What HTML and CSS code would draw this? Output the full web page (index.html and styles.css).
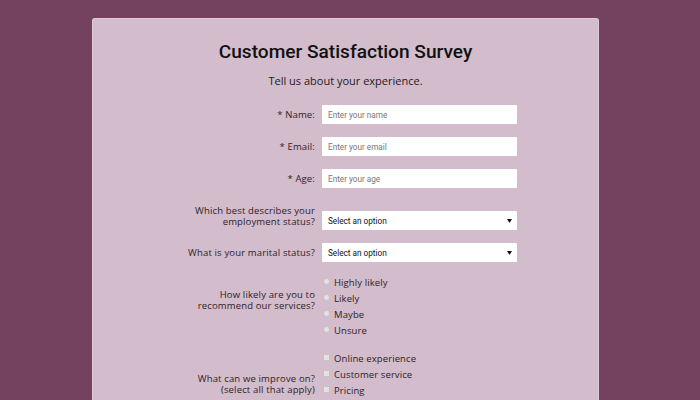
FILE: index.html
```html
<!DOCTYPE html>
<html lang="en">
<head>
<meta charset="utf-8">
<title>Customer Satisfaction Survey</title>
<link rel="stylesheet" href="styles.css">
</head>
<body>
<main class="card">
  <h1 class="title">Customer Satisfaction Survey</h1>
  <p class="subtitle">Tell us about your experience.</p>
  <form class="form">
    <div class="row row-center">
      <div class="label-col"><label class="label" for="name">* Name:</label></div>
      <div class="control"><input class="field" id="name" type="text" placeholder="Enter your name"></div>
    </div>
    <div class="row row-center">
      <div class="label-col"><label class="label" for="email">* Email:</label></div>
      <div class="control"><input class="field" id="email" type="email" placeholder="Enter your email"></div>
    </div>
    <div class="row row-center">
      <div class="label-col"><label class="label" for="age">* Age:</label></div>
      <div class="control"><input class="field" id="age" type="text" placeholder="Enter your age"></div>
    </div>
    <div class="row row-top row-employment">
      <div class="label-col"><label class="label" for="employment">Which best describes your employment status?</label></div>
      <div class="control"><select class="field select" id="employment"><option>Select an option</option></select></div>
    </div>
    <div class="row row-center row-tight">
      <div class="label-col"><label class="label" for="marital">What is your marital status?</label></div>
      <div class="control"><select class="field select" id="marital"><option>Select an option</option></select></div>
    </div>
    <div class="row row-top row-tight row-radio">
      <div class="label-col"><span class="label">How likely are you to recommend our services?</span></div>
      <ul class="control choices">
        <li class="choice"><input class="radio" type="radio" name="rec"><span>Highly likely</span></li>
        <li class="choice"><input class="radio" type="radio" name="rec"><span>Likely</span></li>
        <li class="choice"><input class="radio" type="radio" name="rec"><span>Maybe</span></li>
        <li class="choice"><input class="radio" type="radio" name="rec"><span>Unsure</span></li>
      </ul>
    </div>
    <div class="row row-top row-check">
      <div class="label-col"><span class="label">What can we improve on?<br>(select all that apply)</span></div>
      <ul class="control choices">
        <li class="choice"><input class="check" type="checkbox"><span>Online experience</span></li>
        <li class="choice"><input class="check" type="checkbox"><span>Customer service</span></li>
        <li class="choice"><input class="check" type="checkbox"><span>Pricing</span></li>
      </ul>
    </div>
  </form>
</main>
</body>
</html>
```
FILE: styles.css
```css
html, body {
  margin: 0;
  padding: 0;
}
body {
  background: #74415f;
  font-family: "Open Sans", "DejaVu Sans", sans-serif;
  color: #2e2229;
  height: 400px;
  overflow: hidden;
}
.card {
  width: 507px;
  margin: 18px 0 0 92px;
  padding-top: 22px;
  background: #d3bccb;
  border-radius: 3px;
  box-shadow: inset 0 0 0 1px rgba(255, 255, 255, 0.25);
  min-height: 420px;
}
.title {
  margin: 0;
  font-family: Roboto, "Liberation Sans", sans-serif;
  font-weight: 500;
  font-size: 19.1px;
  line-height: 24px;
  text-align: center;
  color: #111;
}
.subtitle {
  margin: 10px 0 0;
  font-size: 11px;
  line-height: 14px;
  text-align: center;
  color: #1e1a1d;
}
.form {
  margin-top: 17px;
}
.row {
  display: flex;
  margin-bottom: 13px;
}
.row-center { align-items: center; }
.row-top { align-items: flex-start; }
.row-tight { margin-bottom: 12px; }
.label-col {
  width: 223px;
  display: flex;
  justify-content: flex-end;
}
.label {
  max-width: 128px;
  text-align: right;
  font-size: 9.5px;
  font-weight: 500;
  line-height: 11px;
  letter-spacing: 0.15px;
  color: #2e2229;
}
.row-employment .label { padding-top: 3.5px; }
.row-employment .control { margin-top: 10px; }
.row-radio .label { padding-top: 14.5px; }
.row-check .label { padding-top: 22.5px; }
.control {
  margin: 0 0 0 7px;
  width: 195px;
  padding: 0;
}
.field {
  box-sizing: border-box;
  display: block;
  width: 195px;
  height: 19px;
  margin: 0;
  padding: 0 6px;
  border: 0;
  border-radius: 1px;
  background: #fff;
  font-family: Roboto, "Liberation Sans", Arial, sans-serif;
  font-size: 8.2px;
  color: #111;
  outline: none;
}
.field::placeholder {
  color: #777;
}
.select {
  -webkit-appearance: none;
  appearance: none;
  background: #fff url("data:image/svg+xml,%3Csvg xmlns='http://www.w3.org/2000/svg' width='5' height='4'%3E%3Cpath d='M0 0h5L2.5 4z' fill='%23111'/%3E%3C/svg%3E") no-repeat right 5px center;
  color: #111;
}
.choices {
  list-style: none;
}
.choice {
  display: flex;
  align-items: center;
  height: 16px;
  font-size: 9.5px;
  font-weight: 500;
  letter-spacing: 0.1px;
  color: #2e2229;
}
.radio, .check {
  -webkit-appearance: none;
  appearance: none;
  box-sizing: border-box;
  width: 7px;
  height: 7px;
  margin: 0 4px 1px 1px;
  background: #e6e2e4;
  border: 1px solid #c9c0c6;
}
.radio { border-radius: 50%; }
.check { border-radius: 1px; }
```
